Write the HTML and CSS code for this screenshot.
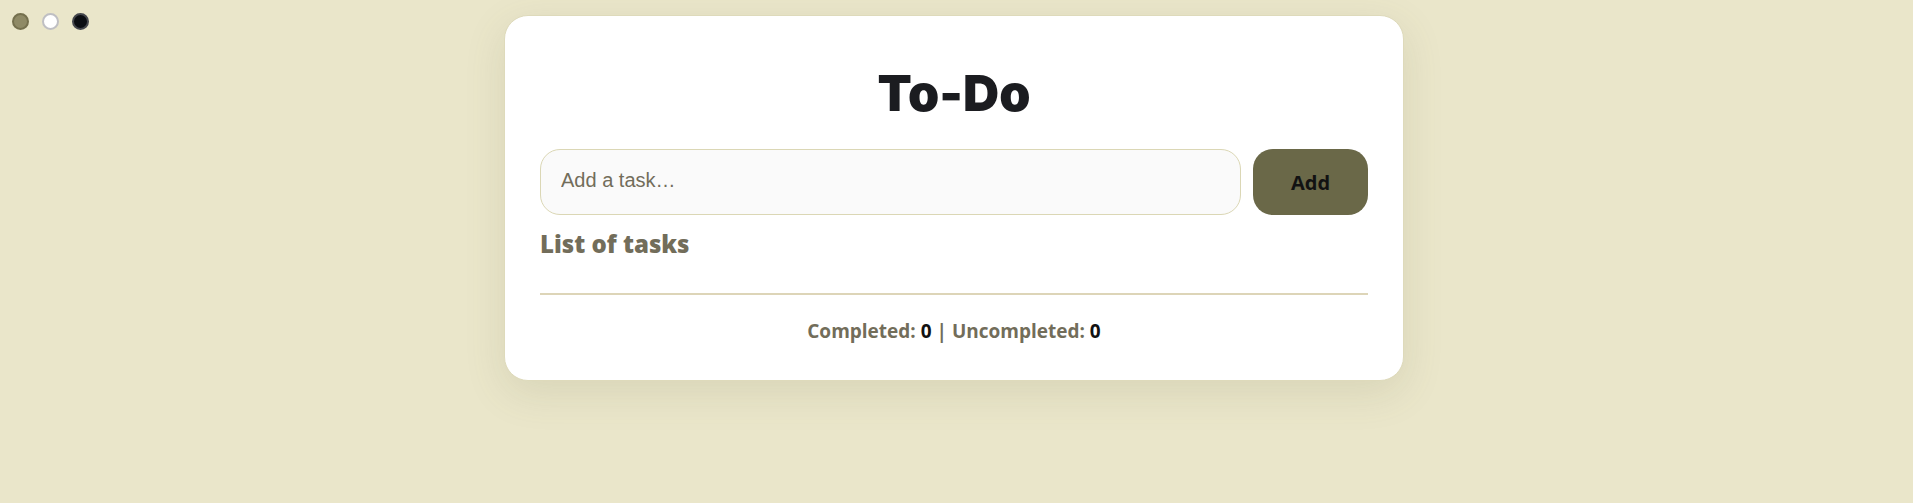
FILE: index.html
```html
<!DOCTYPE html>
<html lang="en">
<head>
<meta charset="utf-8">
<meta name="viewport" content="width=device-width, initial-scale=1">
<title>To-Do</title>
<link rel="stylesheet" href="styles.css">
</head>
<body>
<div class="themes">
<button class="theme theme-olive" type="button" aria-label="Olive theme"></button>
<button class="theme theme-light" type="button" aria-label="Light theme"></button>
<button class="theme theme-dark" type="button" aria-label="Dark theme"></button>
</div>
<main class="card">
<h1 class="title">To-Do</h1>
<form class="entry">
<input class="entry-input" type="text" placeholder="Add a task…" aria-label="Add a task">
<button class="entry-button" type="submit">Add</button>
</form>
<h2 class="subtitle">List of tasks</h2>
<p class="summary">Completed: <span class="count">0</span> | Uncompleted: <span class="count">0</span></p>
</main>
</body>
</html>
```

FILE: styles.css
```css
* {
  box-sizing: border-box;
}

body {
  margin: 0;
  min-height: 100vh;
  padding: 15px 21px 48px 16px;
  background: #eae6ca;
  color: #1b1c20;
  font-family: "Segoe UI", "Open Sans", "Noto Sans", sans-serif;
}

.themes {
  position: absolute;
  top: 13px;
  left: 12px;
  display: flex;
  gap: 13px;
}

.theme {
  width: 17px;
  height: 17px;
  padding: 0;
  border: 2px solid;
  border-radius: 50%;
}

.theme-olive {
  background: #8f8a66;
  border-color: #75704e;
}

.theme-light {
  background: #ffffff;
  border-color: #bfbfc3;
}

.theme-dark {
  background: #0b0d12;
  border-color: #44464c;
}

.card {
  max-width: 900px;
  margin: 0 auto;
  padding: 47px 35px 35px;
  background: #ffffff;
  border: 1px solid #dedabb;
  border-radius: 24px;
  box-shadow: 0 12px 40px rgba(106, 104, 72, 0.14);
}

.title {
  margin: 0 0 26px;
  font-family: "Segoe UI", Inter, "Open Sans", sans-serif;
  font-size: 50px;
  line-height: 60px;
  font-weight: 900;
  text-align: center;
}

.entry {
  display: flex;
  gap: 12px;
}

.entry-input {
  flex: 1;
  min-width: 0;
  height: 66px;
  padding: 0 20px 4px;
  background: #fafafa;
  border: 1px solid #dbd7b5;
  border-radius: 20px;
  color: #1b1c20;
  font-family: Arial, "Liberation Sans", sans-serif;
  font-size: 20px;
}

.entry-input::placeholder {
  color: #726d5a;
  opacity: 1;
}

.entry-button {
  width: 115px;
  padding: 0;
  background: #6a6848;
  border: 0;
  border-radius: 20px;
  color: #121212;
  font-family: inherit;
  font-size: 20px;
  font-weight: 700;
}

.subtitle {
  margin: 11px 0 31px;
  color: #726d5a;
  font-size: 24px;
  line-height: 36px;
  font-weight: 800;
}

.summary {
  margin: 0;
  padding-top: 23px;
  border-top: 2px solid #ddd5b8;
  color: #726d5a;
  font-size: 19px;
  line-height: 27px;
  font-weight: 700;
  text-align: center;
}

.count {
  color: #121212;
}
```
